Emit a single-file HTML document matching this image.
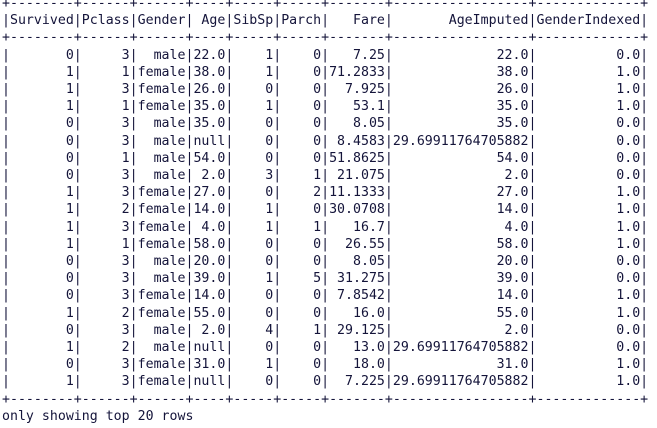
<!DOCTYPE html>
<html><head><meta charset="utf-8"><style>
html,body{margin:0;padding:0;background:#fff;width:657px;height:428px;overflow:hidden}
pre{margin:0;position:absolute;left:2px;top:-5px;font-family:"DejaVu Sans Mono","Liberation Mono",monospace;font-size:13.25px;line-height:17.2px;color:#14143a}
</style></head><body><pre>+--------+------+------+----+-----+-----+-------+-----------------+-------------+
|Survived|Pclass|Gender| Age|SibSp|Parch|   Fare|       AgeImputed|GenderIndexed|
+--------+------+------+----+-----+-----+-------+-----------------+-------------+
|       0|     3|  male|22.0|    1|    0|   7.25|             22.0|          0.0|
|       1|     1|female|38.0|    1|    0|71.2833|             38.0|          1.0|
|       1|     3|female|26.0|    0|    0|  7.925|             26.0|          1.0|
|       1|     1|female|35.0|    1|    0|   53.1|             35.0|          1.0|
|       0|     3|  male|35.0|    0|    0|   8.05|             35.0|          0.0|
|       0|     3|  male|null|    0|    0| 8.4583|29.69911764705882|          0.0|
|       0|     1|  male|54.0|    0|    0|51.8625|             54.0|          0.0|
|       0|     3|  male| 2.0|    3|    1| 21.075|              2.0|          0.0|
|       1|     3|female|27.0|    0|    2|11.1333|             27.0|          1.0|
|       1|     2|female|14.0|    1|    0|30.0708|             14.0|          1.0|
|       1|     3|female| 4.0|    1|    1|   16.7|              4.0|          1.0|
|       1|     1|female|58.0|    0|    0|  26.55|             58.0|          1.0|
|       0|     3|  male|20.0|    0|    0|   8.05|             20.0|          0.0|
|       0|     3|  male|39.0|    1|    5| 31.275|             39.0|          0.0|
|       0|     3|female|14.0|    0|    0| 7.8542|             14.0|          1.0|
|       1|     2|female|55.0|    0|    0|   16.0|             55.0|          1.0|
|       0|     3|  male| 2.0|    4|    1| 29.125|              2.0|          0.0|
|       1|     2|  male|null|    0|    0|   13.0|29.69911764705882|          0.0|
|       0|     3|female|31.0|    1|    0|   18.0|             31.0|          1.0|
|       1|     3|female|null|    0|    0|  7.225|29.69911764705882|          1.0|
+--------+------+------+----+-----+-----+-------+-----------------+-------------+
only showing top 20 rows</pre></body></html>
